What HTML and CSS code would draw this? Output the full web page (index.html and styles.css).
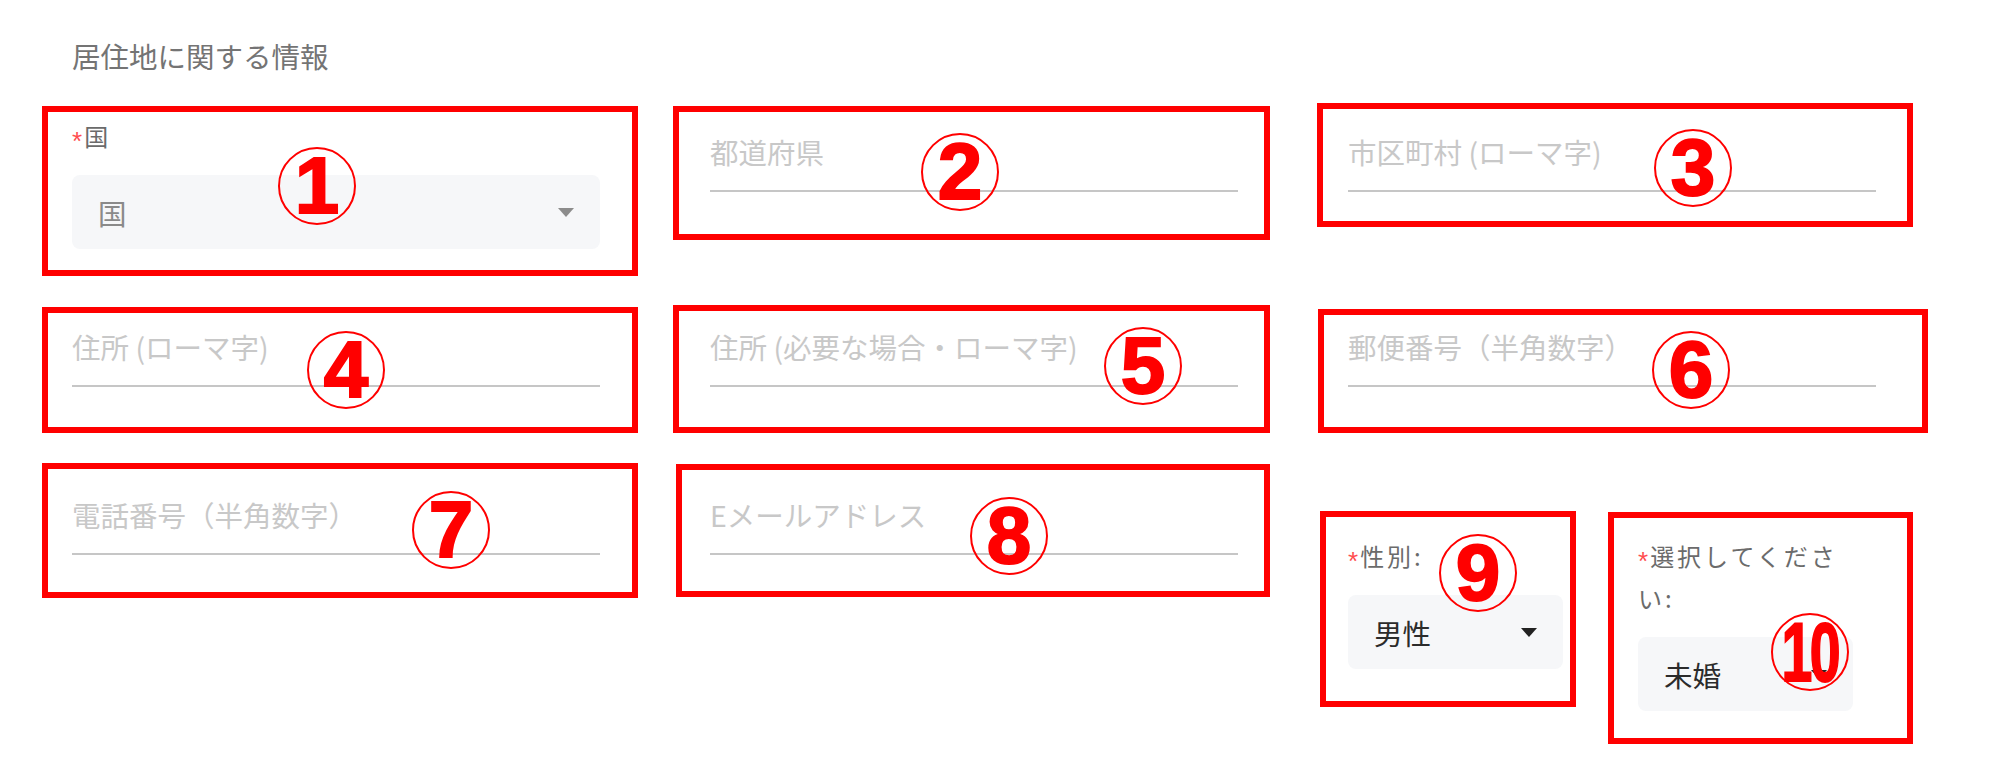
FILE: index.html
```html
<!DOCTYPE html>
<html lang="ja">
<head>
<meta charset="utf-8">
<title>居住地に関する情報</title>
<link rel="stylesheet" href="styles.css">
</head>
<body>
<div class="page">
  <h2 class="section-title">居住地に関する情報</h2>

  <div class="row row-1">
    <div class="field">
      <div class="label required">国</div>
      <div class="select is-placeholder"><span class="select-value">国</span><span class="caret"></span></div>
    </div>
    <div class="input"><span class="ph">都道府県</span></div>
    <div class="input"><span class="ph">市区町村 (ローマ字)</span></div>
  </div>

  <div class="row row-2">
    <div class="input"><span class="ph">住所 (ローマ字)</span></div>
    <div class="input"><span class="ph">住所 (必要な場合・ローマ字)</span></div>
    <div class="input"><span class="ph">郵便番号（半角数字）</span></div>
  </div>

  <div class="row row-3">
    <div class="input"><span class="ph">電話番号（半角数字）</span></div>
    <div class="input"><span class="ph">Eメールアドレス</span></div>
    <div class="pair">
      <div class="field small">
        <div class="label required">性別:</div>
        <div class="select"><span class="select-value">男性</span><span class="caret"></span></div>
      </div>
      <div class="field small">
        <div class="label required">選択してください:</div>
        <div class="select"><span class="select-value">未婚</span><span class="caret"></span></div>
      </div>
    </div>
  </div>

  <div class="annot box a1"></div>
  <div class="annot box a2"></div>
  <div class="annot box a3"></div>
  <div class="annot box a4"></div>
  <div class="annot box a5"></div>
  <div class="annot box a6"></div>
  <div class="annot box a7"></div>
  <div class="annot box a8"></div>
  <div class="annot box a9"></div>
  <div class="annot box a10"></div>

  <div class="annot num n1"><span>1</span></div>
  <div class="annot num n2"><span>2</span></div>
  <div class="annot num n3"><span>3</span></div>
  <div class="annot num n4"><span>4</span></div>
  <div class="annot num n5"><span>5</span></div>
  <div class="annot num n6"><span>6</span></div>
  <div class="annot num n7"><span>7</span></div>
  <div class="annot num n8"><span>8</span></div>
  <div class="annot num n9"><span>9</span></div>
  <div class="annot num n10"><span class="two">10</span></div>
</div>
</body>
</html>
```

FILE: styles.css
```css
* {
  box-sizing: border-box;
}

body {
  margin: 0;
  background: #ffffff;
  font-family: "Noto Sans CJK JP", "Noto Sans", sans-serif;
}

.page {
  position: relative;
  width: 2000px;
  height: 767px;
  padding-left: 72px;
  overflow: hidden;
}

.section-title {
  margin: 36px 0 0;
  font-size: 28.5px;
  line-height: 40px;
  font-weight: 400;
  color: #747474;
}

.row {
  display: grid;
  grid-template-columns: repeat(3, 528px);
  column-gap: 110px;
  align-items: start;
}

.row-1 { margin-top: 39px; }
.row-2 { margin-top: 78px; }
.row-3 { margin-top: 108px; }

.label {
  font-size: 24px;
  line-height: 42px;
  letter-spacing: 3px;
  color: #6b6b6b;
}

.label.required::before {
  content: "*";
  font-family: "Liberation Sans", sans-serif;
  font-size: 26px;
  line-height: 1;
  letter-spacing: 2px;
  color: #ff4d4f;
  vertical-align: -4px;
}

.select {
  height: 74px;
  margin-top: 18px;
  padding: 0 26px;
  display: flex;
  align-items: center;
  justify-content: space-between;
  background: #f6f7f9;
  border-radius: 8px;
  font-size: 28.5px;
  color: #2b2b2b;
}

.select.is-placeholder {
  color: #8a8a8a;
}

.caret {
  width: 0;
  height: 0;
  border-left: 8px solid transparent;
  border-right: 8px solid transparent;
  border-top: 9px solid #222222;
}

.is-placeholder .caret {
  border-top-color: #8c8c8c;
}

.input {
  height: 60px;
  padding-bottom: 18px;
  border-bottom: 2px solid #c6c6c6;
  font-size: 28.5px;
  line-height: 40px;
  color: #c8c8c8;
  white-space: nowrap;
}

.row-1 .input {
  margin-top: 17px;
}

.pair {
  display: flex;
  gap: 75px;
  margin-top: 40px;
}

.field.small {
  width: 215px;
}

/* annotation overlay */
.annot {
  position: absolute;
}

.box {
  border: 6px solid #ff0000;
}

.a1  { left: 42px;   top: 106px; width: 596px; height: 170px; }
.a2  { left: 673px;  top: 106px; width: 597px; height: 134px; }
.a3  { left: 1317px; top: 103px; width: 596px; height: 124px; }
.a4  { left: 42px;   top: 307px; width: 596px; height: 126px; }
.a5  { left: 673px;  top: 305px; width: 597px; height: 128px; }
.a6  { left: 1318px; top: 309px; width: 610px; height: 124px; }
.a7  { left: 42px;   top: 463px; width: 596px; height: 135px; }
.a8  { left: 676px;  top: 464px; width: 594px; height: 133px; }
.a9  { left: 1320px; top: 511px; width: 256px; height: 196px; }
.a10 { left: 1608px; top: 512px; width: 305px; height: 232px; }

.num {
  width: 78px;
  height: 78px;
  border: 2.5px solid #ff0000;
  border-radius: 50%;
  display: flex;
  align-items: center;
  justify-content: center;
  font-family: "Liberation Sans", Arial, sans-serif;
  font-weight: 700;
  font-size: 80px;
  color: #ff0000;
  -webkit-text-stroke: 2px #ff0000;
}

.num span {
  display: block;
  line-height: 0.75;
}

.num .two {
  font-size: 84px;
  letter-spacing: -4px;
  transform: scaleX(0.66);
}

.n1  { left: 278px;  top: 147px; }
.n2  { left: 921px;  top: 133px; }
.n3  { left: 1654px; top: 129px; }
.n4  { left: 307px;  top: 331px; }
.n5  { left: 1104px; top: 327px; }
.n6  { left: 1652px; top: 331px; }
.n7  { left: 412px;  top: 491px; }
.n8  { left: 970px;  top: 497px; }
.n9  { left: 1439px; top: 534px; }
.n10 { left: 1771px; top: 613px; }
```
